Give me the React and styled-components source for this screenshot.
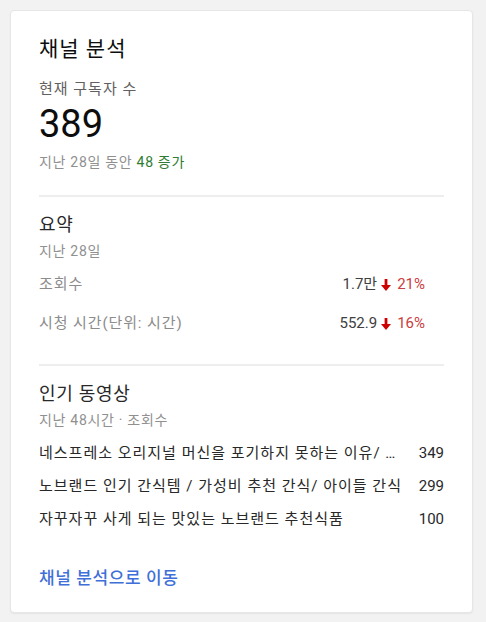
import React from "react";
import styled, { createGlobalStyle } from "styled-components";

const GlobalStyle = createGlobalStyle`
  body {
    margin: 0;
    background: #f2f2f2;
    font-family: Roboto, "Noto Sans CJK KR", sans-serif;
    color: #0d0d0d;
  }
`;

const summary = [
  { label: "조회수", value: "1.7만", change: "21%" },
  { label: "시청 시간(단위: 시간)", value: "552.9", change: "16%" },
];

const videos = [
  { title: "네스프레소 오리지널 머신을 포기하지 못하는 이유/ 네스프레소 머신 추천", views: 349 },
  { title: "노브랜드 인기 간식템 / 가성비 추천 간식/ 아이들 간식", views: 299 },
  { title: "자꾸자꾸 사게 되는 맛있는 노브랜드 추천식품", views: 100 },
];

const DownArrow = () => (
  <ArrowSvg viewBox="0 0 10 12" width="10" height="12">
    <rect x="3.6" y="0" width="2.8" height="7" fill="#c00" />
    <polygon points="0,6 10,6 5,12" fill="#c00" />
  </ArrowSvg>
);

const App = () => {
  return (
    <>
      <GlobalStyle />
      <Card>
        <Section>
          <Title>채널 분석</Title>
          <Label>현재 구독자 수</Label>
          <BigNumber>389</BigNumber>
          <Sub>
            지난 28일 동안 <Green>48 증가</Green>
          </Sub>
        </Section>

        <Section $pad={31}>
          <SectionTitle>요약</SectionTitle>
          <Sub $mt={4}>지난 28일</Sub>
          <StatList>
            {summary.map((s) => (
              <StatRow key={s.label}>
                <StatLabel>{s.label}</StatLabel>
                <StatValue>
                  {s.value}
                  <DownArrow />
                  <Change>{s.change}</Change>
                </StatValue>
              </StatRow>
            ))}
          </StatList>
        </Section>

        <Section $last>
          <SectionTitle>인기 동영상</SectionTitle>
          <Sub $mt={4}>지난 48시간 · 조회수</Sub>
          <VideoList>
            {videos.map((v) => (
              <VideoRow key={v.views}>
                <VideoTitle>{v.title}</VideoTitle>
                <Views>{v.views}</Views>
              </VideoRow>
            ))}
          </VideoList>
        </Section>

        <LinkText href="#">채널 분석으로 이동</LinkText>
      </Card>
    </>
  );
};

export default App;

const Card = styled.div`
  box-sizing: border-box;
  width: 463px;
  margin: 10px;
  padding: 24px 28px 23px;
  background: #fff;
  border: 1px solid #e6e6e6;
  border-radius: 4px;
  box-shadow: 0 1px 2px rgba(0, 0, 0, 0.06);
`;

const Section = styled.div`
  padding-bottom: ${(p) => (p.$last ? 0 : p.$pad || 23)}px;
  border-bottom: ${(p) => (p.$last ? "none" : "2px solid #eeeeee")};
  margin-bottom: ${(p) => (p.$last ? 0 : 16)}px;
`;

const Title = styled.div`
  font-size: 21px;
  line-height: 28px;
  letter-spacing: 1px;
  color: #0d0d0d;
`;

const Label = styled.div`
  margin-top: 16px;
  font-size: 15px;
  line-height: 20px;
  letter-spacing: 1px;
  color: #606060;
`;

const BigNumber = styled.div`
  margin-top: 3px;
  font-size: 38px;
  line-height: 44px;
  color: #0d0d0d;
`;

const Sub = styled.div`
  margin-top: ${(p) => (p.$mt !== undefined ? p.$mt : 6)}px;
  font-size: 14px;
  line-height: 20px;
  letter-spacing: 0.7px;
  color: #909090;
`;

const Green = styled.span`
  color: #2e7d32;
`;

const SectionTitle = styled.div`
  font-size: 18px;
  line-height: 24px;
  letter-spacing: 0.7px;
  color: #282828;
`;

const StatList = styled.div`
  display: flex;
  flex-direction: column;
  gap: 19px;
  margin-top: 13px;
`;

const StatRow = styled.div`
  display: flex;
  justify-content: space-between;
  align-items: center;
  padding-right: 19px;
  font-size: 15px;
  line-height: 20px;
`;

const StatLabel = styled.span`
  letter-spacing: 0.9px;
  color: #8c8c8c;
`;

const StatValue = styled.span`
  display: flex;
  align-items: center;
  color: #404040;
`;

const ArrowSvg = styled.svg`
  margin: 2px 6px 0 4px;
`;

const Change = styled.span`
  color: #c94040;
`;

const VideoList = styled.div`
  display: flex;
  flex-direction: column;
  gap: 13px;
  margin-top: 13px;
`;

const VideoRow = styled.div`
  display: flex;
  align-items: center;
  gap: 14px;
  font-size: 15px;
  line-height: 20px;
`;

const VideoTitle = styled.span`
  flex: 1;
  min-width: 0;
  white-space: nowrap;
  overflow: hidden;
  text-overflow: ellipsis;
  letter-spacing: 1px;
  color: #282828;
`;

const Views = styled.span`
  flex: none;
  color: #282828;
`;

const LinkText = styled.a`
  display: block;
  margin-top: 38px;
  font-size: 17px;
  line-height: 22px;
  font-weight: 500;
  letter-spacing: 0.6px;
  color: #3f6fd8;
  text-decoration: none;
`;
